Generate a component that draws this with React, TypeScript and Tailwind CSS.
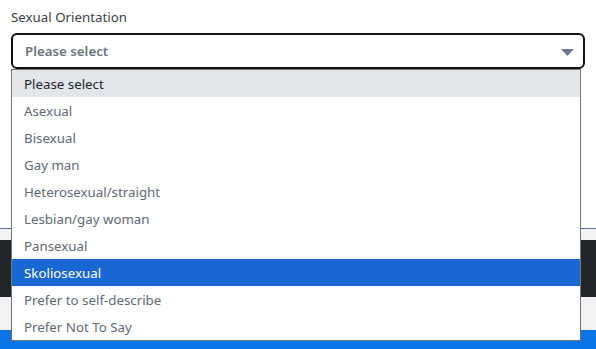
const options = [
    "Please select",
    "Asexual",
    "Bisexual",
    "Gay man",
    "Heterosexual/straight",
    "Lesbian/gay woman",
    "Pansexual",
    "Skoliosexual",
    "Prefer to self-describe",
    "Prefer Not To Say",
];

function Caret() {
    return <svg width="13" height="7" viewBox="0 0 13 7" className="shrink-0">
        <path d="M0 0 H13 L6.5 7 Z" fill="#6b778a"/>
    </svg>;
}

function OptionList({selected, hovered}: { selected: number, hovered: number }) {
    return <ul className="absolute left-[11px] top-[69px] w-[570px] border border-[#767676] bg-white">
        {options.map((o, i) => <li
            key={o}
            className={`h-[27px] pl-[12px] pt-[2px] flex items-center ${i === selected ? 'bg-[#1967d2] text-white' : i === hovered ? 'bg-[#e2e5e9] text-[#212529]' : 'text-[#5f6a76]'}`}>
            {o}
        </li>)}
    </ul>;
}

export default function App() {
    return <div className="relative w-[596px] h-[349px] overflow-hidden bg-white text-[13.3px] font-['Noto_Sans',sans-serif]">
        <div className="h-[228px] px-[11px] pt-[7px]">
            <label className="block leading-5 text-[#3a3f44]">Sexual Orientation</label>
            <div className="mt-[6px] h-[36px] flex items-center justify-between border-2 border-[#111] rounded-[6px] pl-[12px] pr-[9px] pt-[2px]">
                <span className="font-semibold text-[#6c757d]">Please select</span>
                <Caret/>
            </div>
        </div>
        <div className="h-[1px] bg-[#5d7190]"/>
        <div className="h-[11px] bg-[#f1f2f4]"/>
        <div className="h-[57px] bg-[#212529]"/>
        <div className="h-[33px] bg-[#f1f2f4]"/>
        <div className="h-[19px] bg-[#0b74e9]"/>
        <OptionList selected={7} hovered={0}/>
    </div>;
}
